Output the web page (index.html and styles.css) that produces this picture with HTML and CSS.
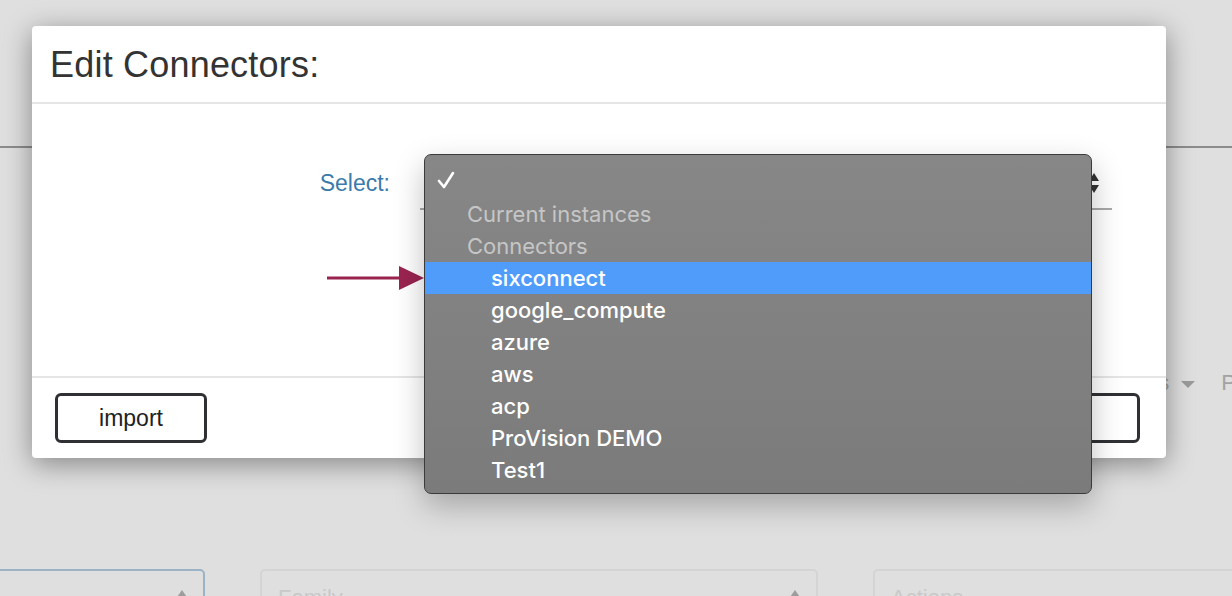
FILE: index.html
```html
<!DOCTYPE html>
<html lang="en">
<head>
    <meta charset="UTF-8">
    <title>Edit Connectors</title>
    <link rel="stylesheet" href="styles.css">
</head>
<body>
    <div class="page">
        <div class="topbar"></div>
        <div class="toolbar">
            <span class="tool">Columns <span class="caret"></span></span>
            <span class="tool">P</span>
        </div>
        <div class="filters">
            <div class="filter active"><span></span><span class="up"></span></div>
            <div class="filter"><span>Family</span><span class="up"></span></div>
            <div class="filter"><span>Actions</span></div>
        </div>
    </div>

    <!-- modal -->
    <div class="modal">
        <div class="modal-header">
            <h2>Edit Connectors:</h2>
        </div>
        <div class="modal-body">
            <div class="form-row">
                <label class="form-label">Select:</label>
                <div class="select-box">
                    <svg class="updown" width="12" height="22" viewBox="0 0 12 22">
                        <polygon points="6,1 11,9 1,9" fill="#333"/>
                        <polygon points="1,13 11,13 6,21" fill="#333"/>
                    </svg>
                </div>
            </div>
        </div>
        <div class="modal-footer">
            <button class="btn">import</button>
            <button class="btn">save</button>
        </div>
    </div>

    <!-- arrow pointing at the option -->
    <svg class="pointer" width="98" height="26" viewBox="0 0 98 26">
        <line x1="0" y1="13" x2="76" y2="13" stroke="#9a2450" stroke-width="3"/>
        <polygon points="72,1 97,13 72,25" fill="#9a2450"/>
    </svg>

    <!-- native select popup -->
    <div class="menu">
        <div class="menu-row check">
            <svg width="18" height="18" viewBox="0 0 18 18">
                <path d="M2 10 L7 16 L16 2" fill="none" stroke="#fff" stroke-width="2.6" stroke-linecap="round" stroke-linejoin="round"/>
            </svg>
        </div>
        <div class="menu-row group">Current instances</div>
        <div class="menu-row group">Connectors</div>
        <div class="menu-row option selected">sixconnect</div>
        <div class="menu-row option">google_compute</div>
        <div class="menu-row option">azure</div>
        <div class="menu-row option">aws</div>
        <div class="menu-row option">acp</div>
        <div class="menu-row option">ProVision DEMO</div>
        <div class="menu-row option">Test1</div>
    </div>
</body>
</html>
```

FILE: styles.css
```css
body {
    margin: 0;
    background: #dfdfdf;
    font-family: 'Liberation Sans', Arial, sans-serif;
    overflow: hidden;
    height: 596px;
}

.page {
    position: relative;
}

.topbar {
    height: 146px;
    border-bottom: 2px solid #8c8c8c;
}

.toolbar {
    display: flex;
    justify-content: flex-end;
    gap: 26px;
    margin-top: 222px;
    margin-right: -4px;
    color: #a3a3a3;
    font-size: 22px;
    line-height: 26px;
}

.caret {
    display: inline-block;
    width: 0;
    height: 0;
    margin-left: 6px;
    vertical-align: middle;
    border-left: 7px solid transparent;
    border-right: 7px solid transparent;
    border-top: 7px solid #9a9a9a;
}

.filters {
    display: flex;
    gap: 55px;
    margin-top: 173px;
    margin-left: -353px;
}

.filter {
    flex: 0 0 558px;
    height: 60px;
    box-sizing: border-box;
    border: 2px solid #d4d4d4;
    border-radius: 5px;
    display: flex;
    justify-content: space-between;
    padding: 14px 14px 0 16px;
    color: #c9c9c9;
    font-size: 22px;
}

.filter.active {
    border-color: #9bb3c4;
}

.up {
    width: 0;
    height: 0;
    margin-top: 5px;
    border-left: 7px solid transparent;
    border-right: 7px solid transparent;
    border-bottom: 10px solid #9d9d9d;
}

.modal {
    position: absolute;
    left: 32px;
    top: 26px;
    width: 1134px;
    height: 432px;
    background: #fff;
    border-radius: 4px;
    box-shadow: 0 6px 28px rgba(0, 0, 0, 0.4);
    display: flex;
    flex-direction: column;
}

.modal-header {
    height: 78px;
    border-bottom: 2px solid #e5e5e5;
    padding: 0 18px;
    box-sizing: border-box;
}

.modal-header h2 {
    margin: 0;
    padding-top: 19px;
    font-size: 36px;
    font-weight: normal;
    color: #333;
    line-height: 40px;
    letter-spacing: 0.2px;
}

.modal-body {
    flex: 1;
    padding: 56px 54px 0 23px;
}

.form-row {
    display: grid;
    grid-template-columns: 335px 1fr;
    gap: 30px;
    align-items: start;
}

.form-label {
    text-align: right;
    color: #3a7bab;
    font-size: 23px;
    line-height: 46px;
}

.select-box {
    height: 50px;
    border-bottom: 2px solid #a9a9a9;
    display: flex;
    justify-content: flex-end;
    align-items: flex-start;
    padding: 12px 12px 0 0;
    box-sizing: border-box;
}

.modal-footer {
    height: 82px;
    box-sizing: border-box;
    border-top: 2px solid #e5e5e5;
    display: flex;
    justify-content: space-between;
    align-items: center;
    padding: 0 26px 0 23px;
}

.btn {
    width: 152px;
    height: 50px;
    background: #fff;
    border: 3px solid #2f3033;
    border-radius: 6px;
    font-family: 'Liberation Sans', Arial, sans-serif;
    font-size: 23px;
    color: #222;
}

.pointer {
    position: absolute;
    left: 327px;
    top: 265px;
}

.menu {
    position: absolute;
    left: 424px;
    top: 154px;
    width: 668px;
    height: 340px;
    box-sizing: border-box;
    padding-top: 12px;
    background: linear-gradient(#878787, #7b7b7b);
    border: 1px solid #3b3b3b;
    border-radius: 7px;
    box-shadow: 0 12px 30px rgba(0, 0, 0, 0.25);
    font-family: Inter, 'Noto Sans', sans-serif;
    font-size: 22px;
    overflow: hidden;
}

.menu-row {
    height: 32px;
    line-height: 32px;
    color: #fff;
    white-space: nowrap;
}

.check {
    height: 31px;
    padding-left: 12px;
    line-height: 0;
    box-sizing: border-box;
    padding-top: 4px;
}

.group {
    padding-left: 42px;
    color: #c6c6c6;
}

.option {
    padding-left: 66px;
    font-weight: 500;
}

.option.selected {
    background: #4f9cfb;
}
```
